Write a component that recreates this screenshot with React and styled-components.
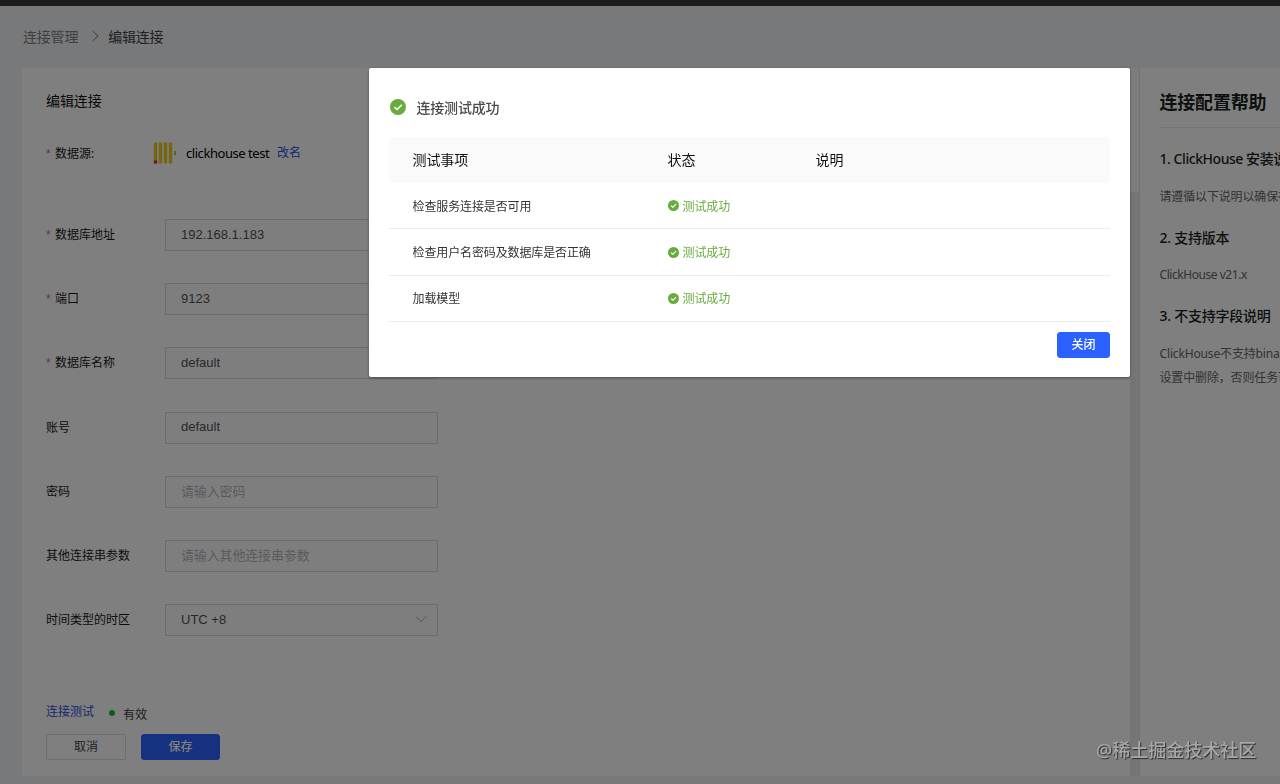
import React from 'react';
import styled, { createGlobalStyle } from 'styled-components';

const Global = createGlobalStyle`
  *, *::before, *::after { box-sizing: border-box; }
  html, body { margin: 0; padding: 0; overflow: hidden; }
  body {
    font-family: "Noto Sans", "Noto Sans CJK SC", sans-serif;
    font-size: 12px;
    color: #262626;
  }
`;

const Page = styled.div`
  width: 1280px;
  height: 784px;
  overflow: hidden;
  display: flex;
  flex-direction: column;
  background: #f0f3f5;
`;

const TopBar = styled.div`
  flex: none;
  height: 6px;
  background: #383838;
`;

const Breadcrumb = styled.nav`
  flex: none;
  height: 62px;
  padding: 0 0 3px 23px;
  display: flex;
  align-items: center;
  font-size: 14px;
  letter-spacing: -0.2px;
  color: #7c7f82;
  svg { margin: 0 8px 0 13px; }
`;

const Current = styled.span`
  color: #404246;
`;

const Content = styled.div`
  flex: none;
  height: 708px;
  padding-left: 22px;
  display: flex;
`;

const Card = styled.section`
  width: 1108px;
  background: #fff;
  padding: 23px 24px 0;
`;

const CardTitle = styled.h2`
  margin: 0;
  height: 20px;
  line-height: 19px;
  font-size: 14px;
  font-weight: 400;
  letter-spacing: -0.1px;
  color: #111;
`;

const SourceRow = styled.div`
  height: 32px;
  margin-top: 26px;
  display: flex;
  align-items: center;
`;

const SourceLogo = styled.span`
  display: flex;
  width: 33px;
`;

const SourceName = styled.span`
  font-size: 13px;
  letter-spacing: -0.45px;
  width: 91px;
  white-space: nowrap;
  color: #000;
`;

const Link = styled.a`
  color: #2f4ce0;
  line-height: 18px;
`;

const Fields = styled.div`
  margin-top: 50px;
`;

const FieldRow = styled.div`
  height: 32px;
  margin-bottom: 32.2px;
  display: flex;
  align-items: center;
`;

const Label = styled.label`
  width: ${(p) => p.$width || 119}px;
  line-height: ${(p) => (p.$width ? 22 : 20)}px;
  padding-top: ${(p) => (p.$width ? 2 : 0)}px;
  color: #1a1a1a;
  white-space: nowrap;
`;

const Star = styled.span`
  display: inline-block;
  width: 9px;
  font-family: "Liberation Sans", sans-serif;
  color: #d9605f;
`;

const Control = styled.div`
  width: 273px;
  height: 32px;
  padding: 0 10px 2px 15px;
  display: flex;
  align-items: center;
  justify-content: space-between;
  background: #fdfdff;
  border: 1px solid #d8d9db;
  font-family: "Liberation Sans", "Noto Sans CJK SC", sans-serif;
  font-size: 13px;
  letter-spacing: ${(p) => (p.$placeholder ? '-0.15px' : '0')};
  color: ${(p) => (p.$placeholder ? '#b4b6ba' : '#505256')};
`;

const StatusLine = styled.div`
  height: 22px;
  margin-top: 65px;
  display: flex;
  align-items: center;
`;

const Dot = styled.i`
  width: 6px;
  height: 6px;
  border-radius: 50%;
  margin: 2px 8px 0 15px;
  background: #10c025;
`;

const Valid = styled.span`
  margin-top: 3px;
  color: #3c3c3c;
`;

const Actions = styled.div`
  margin-top: 11px;
  display: flex;
  gap: 15px;
`;

const Button = styled.button`
  width: ${(p) => p.$width}px;
  height: 26px;
  padding: 0 0 2.5px;
  border: 1px solid ${(p) => (p.$primary ? '#2b62ff' : '#dcdcdc')};
  border-radius: ${(p) => (p.$primary ? 3 : 1)}px;
  background: ${(p) => (p.$primary ? '#2b62ff' : '#fff')};
  color: ${(p) => (p.$primary ? '#fff' : '#444')};
  font: ${(p) => (p.$primary ? 500 : 400)} 12px "Noto Sans CJK SC", sans-serif;
`;

const Scrollbar = styled.div`
  width: 9px;
  background: #ebebeb;
`;

const Thumb = styled.div`
  height: 124px;
  background: #fbfbfb;
`;

const Help = styled.aside`
  width: 141px;
  flex: none;
  overflow: hidden;
  padding: 21px 0 0 19.5px;
  border-left: 1px solid #e4e4e4;
  background: #fff;
  white-space: nowrap;
`;

const HelpTitle = styled.h2`
  margin: 0 0 19px;
  height: 39px;
  line-height: 27px;
  border-bottom: 1px solid #e8e8e8;
  font-size: 18px;
  font-weight: 700;
  letter-spacing: -0.2px;
  color: #1b1f23;
`;

const HelpHeading = styled.h3`
  margin: 0 0 ${(p) => p.$gap}px;
  height: 24px;
  line-height: 24px;
  font-size: 14px;
  font-weight: 500;
  letter-spacing: ${(p) => p.$spacing || '-0.25px'};
  color: #1b1f23;
`;

const HelpText = styled.p`
  margin: 0 0 ${(p) => p.$gap}px;
  line-height: 24px;
  letter-spacing: ${(p) => p.$spacing || '-0.15px'};
  color: #666;
`;

const Mask = styled.div`
  position: fixed;
  inset: 0;
  background: rgba(0, 0, 0, 0.5);
`;

const Dialog = styled.div`
  position: absolute;
  top: 68px;
  left: 369px;
  width: 761px;
  height: 309px;
  padding: 30px 20px 0;
  border-radius: 2px;
  background: #fff;
  box-shadow: 0 1px 3px rgba(0, 0, 0, 0.4);
`;

const DialogTitle = styled.div`
  height: 18px;
  display: flex;
  align-items: center;
  gap: 10.5px;
  font-size: 14px;
  font-weight: 500;
  letter-spacing: -0.2px;
  color: #4a4a4a;
  svg { margin: -1px 0 0 1px; }
`;

const Grid = styled.div`
  display: grid;
  grid-template-columns: 255px 148px 1fr;
  align-items: center;
  padding-left: 23.5px;
`;

const HeadRow = styled(Grid)`
  height: 46px;
  margin-top: 21px;
  padding-bottom: 2px;
  border-radius: 4px;
  background: #fafafa;
  font-size: 14px;
  letter-spacing: -0.1px;
  color: #111;
`;

const BodyRow = styled(Grid)`
  height: 46.4px;
  border-bottom: 1px solid #ededed;
  letter-spacing: -0.12px;
  color: #333;
`;

const Success = styled.span`
  display: flex;
  align-items: center;
  gap: 4px;
  color: #67ac3d;
`;

const DialogFooter = styled.div`
  display: flex;
  justify-content: flex-end;
  padding-top: 9.8px;
`;

const Watermark = styled.div`
  position: absolute;
  left: 1096px;
  top: 737px;
  line-height: 26px;
  font-size: 18px;
  font-weight: 500;
  white-space: nowrap;
  color: #a8a8a8;
  text-shadow: 1px 1px 1px rgba(0, 0, 0, 0.65);
`;

const CheckIcon = ({ size }) => (
  <svg width={size} height={size} viewBox="0 0 16 16">
    <circle cx="8" cy="8" r="8" fill="#67ac3d" />
    <path d="M4.4 8.2 7 10.5 11.8 5.9" fill="none" stroke="#fff" strokeWidth="1.6" />
  </svg>
);

const ClickHouseLogo = () => (
  <svg width="24" height="22" viewBox="0 0 24 22">
    <g fill="#ebcb20">
      <rect x="0.8" y="0.5" width="3.4" height="19" />
      <rect x="5.8" y="0.5" width="3.4" height="21" />
      <rect x="10.8" y="0.5" width="3.4" height="21" />
      <rect x="15.8" y="0.5" width="3.4" height="21" />
    </g>
    <rect x="21" y="9" width="2" height="4" fill="#b4c820" />
    <rect x="0.8" y="18.5" width="3.4" height="3" fill="#e82030" />
  </svg>
);

const fields = [
  { label: '数据库地址', value: '192.168.1.183', required: true },
  { label: '端口', value: '9123', required: true },
  { label: '数据库名称', value: 'default', required: true },
  { label: '账号', value: 'default' },
  { label: '密码', placeholder: '请输入密码' },
  { label: '其他连接串参数', placeholder: '请输入其他连接串参数' },
  { label: '时间类型的时区', value: 'UTC +8', select: true },
];

const checks = ['检查服务连接是否可用', '检查用户名密码及数据库是否正确', '加载模型'];

export default function App() {
  return (
    <>
      <Global />
      <Page lang="zh-CN">
        <TopBar />
        <Breadcrumb>
          <span>连接管理</span>
          <svg width="9" height="12" viewBox="0 0 9 12">
            <path d="M1.5 1 7 6 1.5 11" fill="none" stroke="#777" />
          </svg>
          <Current>编辑连接</Current>
        </Breadcrumb>
        <Content>
          <Card>
            <CardTitle>编辑连接</CardTitle>
            <SourceRow>
              <Label $width={107}><Star>*</Star>数据源:</Label>
              <SourceLogo><ClickHouseLogo /></SourceLogo>
              <SourceName>clickhouse test</SourceName>
              <Link>改名</Link>
            </SourceRow>
            <Fields>
              {fields.map((f) => (
                <FieldRow key={f.label}>
                  <Label>{f.required && <Star>*</Star>}{f.label}</Label>
                  <Control $placeholder={!f.value}>
                    {f.value || f.placeholder}
                    {f.select && (
                      <svg width="12" height="8" viewBox="0 0 12 8">
                        <path d="M1 1.5 6 6.5 11 1.5" fill="none" stroke="#a5a7ab" />
                      </svg>
                    )}
                  </Control>
                </FieldRow>
              ))}
            </Fields>
            <StatusLine>
              <Link>连接测试</Link>
              <Dot />
              <Valid>有效</Valid>
            </StatusLine>
            <Actions>
              <Button $width={80}>取消</Button>
              <Button $width={79} $primary>保存</Button>
            </Actions>
          </Card>
          <Scrollbar><Thumb /></Scrollbar>
          <Help>
            <HelpTitle>连接配置帮助</HelpTitle>
            <HelpHeading $gap={14} $spacing="-0.45px">1. ClickHouse 安装说明</HelpHeading>
            <HelpText $gap={17}>请遵循以下说明以确保在</HelpText>
            <HelpHeading $gap={13}>2. 支持版本</HelpHeading>
            <HelpText $gap={17} $spacing="-0.45px">ClickHouse v21.x</HelpText>
            <HelpHeading $gap={14}>3. 不支持字段说明</HelpHeading>
            <HelpText $gap={0}>ClickHouse不支持binary<br />设置中删除，否则任务可能</HelpText>
          </Help>
        </Content>
      </Page>
      <Mask>
        <Dialog role="dialog">
          <DialogTitle><CheckIcon size={16} />连接测试成功</DialogTitle>
          <HeadRow><span>测试事项</span><span>状态</span><span>说明</span></HeadRow>
          {checks.map((c) => (
            <BodyRow key={c}>
              <span>{c}</span>
              <Success><CheckIcon size={11} />测试成功</Success>
            </BodyRow>
          ))}
          <DialogFooter><Button $width={53} $primary>关闭</Button></DialogFooter>
        </Dialog>
        <Watermark>@稀土掘金技术社区</Watermark>
      </Mask>
    </>
  );
}
